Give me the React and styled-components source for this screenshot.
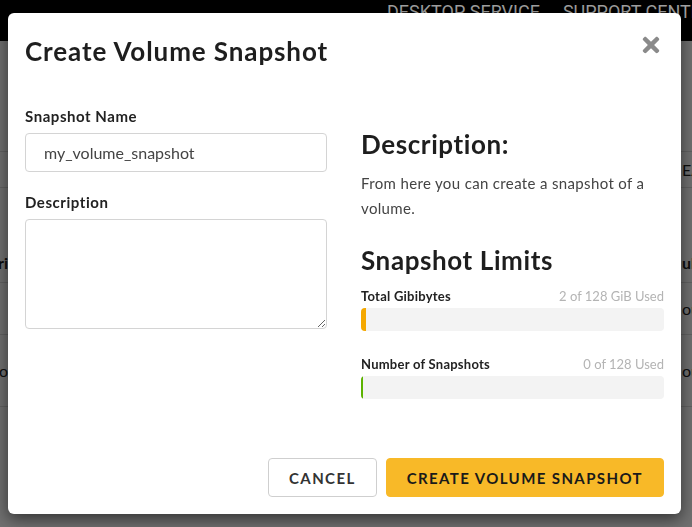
import React from "react";
import styled, { createGlobalStyle } from "styled-components";
import { FaTimes } from "react-icons/fa";

const Global = createGlobalStyle`
  html, body {
    margin: 0;
    padding: 0;
    width: 692px;
    height: 527px;
    overflow: hidden;
    background: #fff;
    font-family: Lato, "Open Sans", sans-serif;
  }
  * { box-sizing: border-box; }
`;

const Page = styled.div`
  width: 692px;
  height: 527px;
  display: flex;
  flex-direction: column;
  background: #fff;
`;

const NavBar = styled.div`
  position: relative;
  z-index: 2;
  height: 41px;
  background: #000;
  display: flex;
  gap: 23px;
  padding: 0 0 0 387px;
  overflow: hidden;
  white-space: nowrap;
`;

const NavLink = styled.span`
  font-family: Roboto, sans-serif;
  font-size: 18px;
  color: #a2a2a2;
  line-height: 24px;
`;

const Toolbar = styled.div`
  height: 111px;
  border-bottom: 1px solid #ddd;
`;

const TableRow = styled.div`
  height: ${(p) => p.$h}px;
  display: flex;
  justify-content: space-between;
  align-items: ${(p) => p.$align || "center"};
  border-bottom: 1px solid #ddd;
  padding-bottom: ${(p) => p.$pb || 0}px;
  font-family: Lato, sans-serif;
  font-size: 16px;
  color: #1e1e1e;
  font-weight: ${(p) => (p.$bold ? 700 : 400)};
`;

const EdgeLeft = styled.div`
  width: 8px;
  overflow: hidden;
  display: flex;
  justify-content: flex-end;
  white-space: nowrap;
`;

const EdgeRight = styled.div`
  width: 10px;
  overflow: hidden;
  white-space: nowrap;
`;

const Backdrop = styled.div`
  position: fixed;
  inset: 0;
  z-index: 1;
  background: rgba(0, 0, 0, 0.56);
`;

const Modal = styled.div`
  position: fixed;
  z-index: 3;
  left: 8px;
  top: 13px;
  width: 673px;
  height: 501px;
  background: #fff;
  border-radius: 6px;
  box-shadow: 0 5px 16px rgba(0, 0, 0, 0.55);
  display: flex;
  flex-direction: column;
  padding: 0 17px 17px;
  color: #1e1e1e;
`;

const Header = styled.div`
  display: flex;
  justify-content: space-between;
  align-items: flex-start;
  height: 76px;
  padding-top: 22px;
`;

const Title = styled.h1`
  margin: 0;
  font-size: 26px;
  line-height: 32px;
  font-weight: 700;
  letter-spacing: 0.9px;
  color: #1e1e1e;
`;

const Close = styled.button`
  border: 0;
  background: none;
  padding: 0;
  margin: -2px 1px 0 0;
  color: #8a8a8a;
  display: flex;
  cursor: pointer;
`;

const Body = styled.div`
  flex: 1;
  display: grid;
  grid-template-columns: 302px 303px;
  column-gap: 34px;
`;

const Column = styled.div`
  display: flex;
  flex-direction: column;
`;

const Label = styled.label`
  font-size: 15px;
  font-weight: 700;
  letter-spacing: 0.55px;
  color: #222;
  margin-top: ${(p) => p.$mt || 0}px;
  margin-bottom: 8px;
`;

const Input = styled.input`
  height: 39px;
  border: 1px solid #d4d4d4;
  border-radius: 4px;
  padding: 0 18px;
  font-family: inherit;
  font-size: 16px;
  color: #444;
  outline: none;
`;

const TextArea = styled.textarea`
  height: 110px;
  border: 1px solid #d4d4d4;
  border-radius: 4px;
  font-family: inherit;
  outline: none;
  resize: vertical;
`;

const Heading = styled.h2`
  margin: ${(p) => p.$mt || 0}px 0 0;
  font-size: 26px;
  font-weight: 700;
  letter-spacing: 0.6px;
  color: #1e1e1e;
  line-height: 30px;
`;

const Text = styled.p`
  margin: 12px 0 0;
  font-size: 15px;
  letter-spacing: 0.35px;
  line-height: 25px;
  color: #444;
`;

const LimitHead = styled.div`
  display: flex;
  justify-content: space-between;
  align-items: baseline;
  margin-top: ${(p) => p.$mt}px;
  font-size: 13px;
`;

const LimitName = styled.span`
  font-weight: 700;
  letter-spacing: 0.25px;
  color: #222;
`;

const LimitUsed = styled.span`
  color: #b4b4b4;
`;

const Track = styled.div`
  margin-top: 4px;
  height: 23px;
  border-radius: 4px;
  background: #f3f3f3;
  overflow: hidden;
  display: flex;
`;

const Fill = styled.div`
  background: ${(p) => p.$color};
`;

const Footer = styled.div`
  display: flex;
  justify-content: flex-end;
  gap: 9px;
`;

const Button = styled.button`
  height: 39px;
  padding: 0 20px;
  border-radius: 4px;
  border: 1px solid ${(p) => (p.$primary ? "#f8b928" : "#cfcfcf")};
  background: ${(p) => (p.$primary ? "#f8b928" : "#fff")};
  color: ${(p) => (p.$primary ? "#1a1a1a" : "#333")};
  font-family: inherit;
  font-size: 15px;
  font-weight: 700;
  letter-spacing: 1.4px;
  cursor: pointer;
`;

const limits = [
  { name: "Total Gibibytes", used: "2 of 128 GiB Used", pct: 2 / 128, color: "#f5a800", mt: 13 },
  { name: "Number of Snapshots", used: "0 of 128 Used", pct: 0.008, color: "#5cb300", mt: 25 },
];

export default function App() {
  return (
    <>
      <Global />
      <Page>
        <NavBar>
          <NavLink>DESKTOP SERVICE</NavLink>
          <NavLink>SUPPORT CENTER</NavLink>
        </NavBar>
        <Toolbar />
        <TableRow $h={36}>
          <EdgeLeft />
          <EdgeRight>EATE</EdgeRight>
        </TableRow>
        <TableRow $h={95} $bold $align="flex-end" $pb={10}>
          <EdgeLeft>Distri</EdgeLeft>
          <EdgeRight>ubnet</EdgeRight>
        </TableRow>
        <TableRow $h={52}>
          <EdgeLeft />
          <EdgeRight>ouo</EdgeRight>
        </TableRow>
        <TableRow $h={72}>
          <EdgeLeft>fo</EdgeLeft>
          <EdgeRight>ouo</EdgeRight>
        </TableRow>
      </Page>
      <Backdrop />
      <Modal>
        <Header>
          <Title>Create Volume Snapshot</Title>
          <Close aria-label="Close">
            <FaTimes size={24} />
          </Close>
        </Header>
        <Body>
          <Column>
            <Label $mt={18}>Snapshot Name</Label>
            <Input defaultValue="my_volume_snapshot" />
            <Label $mt={21}>Description</Label>
            <TextArea />
          </Column>
          <Column>
            <Heading $mt={40}>Description:</Heading>
            <Text>From here you can create a snapshot of a volume.</Text>
            <Heading $mt={24}>Snapshot Limits</Heading>
            {limits.map((l) => (
              <div key={l.name}>
                <LimitHead $mt={l.mt}>
                  <LimitName>{l.name}</LimitName>
                  <LimitUsed>{l.used}</LimitUsed>
                </LimitHead>
                <Track>
                  <Fill $color={l.color} style={{ width: `${l.pct * 100}%` }} />
                </Track>
              </div>
            ))}
          </Column>
        </Body>
        <Footer>
          <Button>CANCEL</Button>
          <Button $primary>CREATE VOLUME SNAPSHOT</Button>
        </Footer>
      </Modal>
    </>
  );
}
